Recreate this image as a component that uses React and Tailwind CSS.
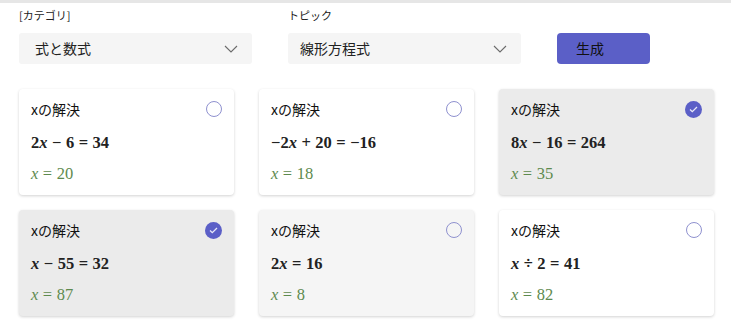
import React from "react";

const X = ({ bold }) => (
  <span className={"italic " + (bold ? "font-bold" : "")}>x</span>
);

const Op = ({ c }) => <span className="mx-[4.5px]">{c}</span>;

const cards = [
  { eq: [["n", "2"], ["x"], ["o", "−"], ["n", "6"], ["o", "="], ["n", "34"]], ans: "20", state: "none" },
  { eq: [["n", "−2"], ["x"], ["o", "+"], ["n", "20"], ["o", "="], ["n", "−16"]], ans: "18", state: "none" },
  { eq: [["n", "8"], ["x"], ["o", "−"], ["n", "16"], ["o", "="], ["n", "264"]], ans: "35", state: "checked" },
  { eq: [["x"], ["o", "−"], ["n", "55"], ["o", "="], ["n", "32"]], ans: "87", state: "checked" },
  { eq: [["n", "2"], ["x"], ["o", "="], ["n", "16"]], ans: "8", state: "hover" },
  { eq: [["x"], ["o", "÷"], ["n", "2"], ["o", "="], ["n", "41"]], ans: "82", state: "none" },
];

const Chevron = () => (
  <svg width="14" height="8" viewBox="0 0 14 8" fill="none">
    <path d="M1 1l6 6 6-6" stroke="#6b6b6b" strokeWidth="1.1" />
  </svg>
);

const Radio = ({ checked }) =>
  checked ? (
    <div className="w-[17px] h-[17px] rounded-full bg-[#5b5fc7] flex items-center justify-center">
      <svg width="9" height="7" viewBox="0 0 9 7" fill="none">
        <path d="M1 3.5l2.3 2.2L8 1" stroke="#e8e8f8" strokeWidth="1.3" />
      </svg>
    </div>
  ) : (
    <div className="w-[16px] h-[16px] rounded-full border-[1.5px] border-[#8f91cf]" />
  );

function Card({ c }) {
  const bg =
    c.state === "checked" ? "bg-[#ebebeb]" : c.state === "hover" ? "bg-[#f5f5f5]" : "bg-white";
  return (
    <div className={`${bg} rounded-[4px] h-[106px] shadow-[0_1px_3px_rgba(0,0,0,0.18)] pl-[12px] pr-[12px] pt-[10px] flex flex-col`}>
      <div className="flex items-center justify-between h-[20px]">
        <span className="text-[14px] text-[#111]" style={{ fontFamily: '"Noto Sans CJK JP", sans-serif' }}>
          xの解決
        </span>
        <Radio checked={c.state === "checked"} />
      </div>
      <div
        className="mt-[13px] text-[16.5px] font-bold text-[#222] leading-[22px]"
        style={{ fontFamily: '"Liberation Serif", serif' }}
      >
        {c.eq.map((t, i) =>
          t[0] === "x" ? <X key={i} bold /> : t[0] === "o" ? <Op key={i} c={t[1]} /> : <span key={i}>{t[1]}</span>
        )}
      </div>
      <div
        className="mt-[9px] text-[16.5px] text-[#5e8a4e] leading-[22px]"
        style={{ fontFamily: '"Liberation Serif", serif' }}
      >
        <X />
        <Op c="=" />
        <span>{c.ans}</span>
      </div>
    </div>
  );
}

export default function App() {
  return (
    <div className="w-[731px] h-[323px] bg-white border-t-[3px] border-[#e6e6e6] overflow-hidden" style={{ fontFamily: '"Noto Sans CJK JP", sans-serif' }}>
      <div className="pl-[19px] pt-[3px] flex items-start">
        <div className="w-[233px]">
          <div className="text-[11px] leading-[18px] text-[#222]">[カテゴリ]</div>
          <div className="mt-[9px] h-[31px] bg-[#f5f5f5] rounded-[3px] flex items-center justify-between pl-[16px] pr-[14px]">
            <span className="text-[14px] text-[#222]">式と数式</span>
            <Chevron />
          </div>
        </div>
        <div className="w-[233px] ml-[36px]">
          <div className="text-[11px] leading-[18px] text-[#222]">トピック</div>
          <div className="mt-[9px] h-[31px] bg-[#f5f5f5] rounded-[3px] flex items-center justify-between pl-[12px] pr-[14px]">
            <span className="text-[14px] text-[#222]">線形方程式</span>
            <Chevron />
          </div>
        </div>
        <div className="ml-[36px] mt-[27px] w-[93px] h-[31px] bg-[#5b5fc7] rounded-[4px] flex items-center pl-[19px]">
          <span className="text-[14px] text-[#111]">生成</span>
        </div>
      </div>
      <div className="ml-[19px] mt-[25px] w-[695px] grid grid-cols-3 gap-x-[25px] gap-y-[15px]">
        {cards.map((c, i) => (
          <Card key={i} c={c} />
        ))}
      </div>
    </div>
  );
}
